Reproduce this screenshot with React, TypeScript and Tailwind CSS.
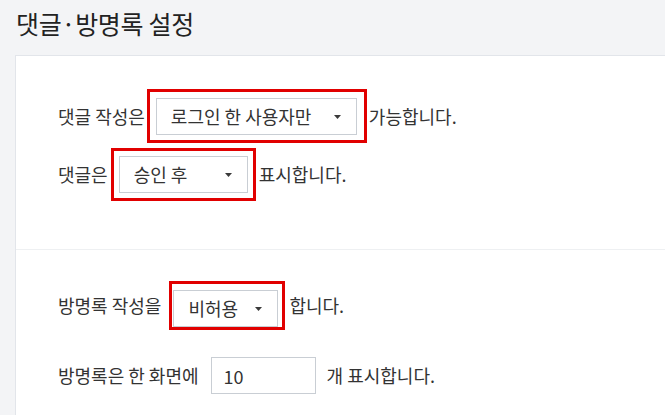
import { useState } from "react";

const FONT = { fontFamily: '"Noto Sans CJK KR", "Noto Sans", sans-serif' };

function Caret() {
  return (
    <svg width="7" height="4" viewBox="0 0 7 4" className="shrink-0">
      <path d="M0 0h7L3.5 4z" fill="#3a3a3a" />
    </svg>
  );
}

function Select({ value, width }: { value: string; width: string }) {
  return (
    <div
      className={`flex h-[37px] items-center justify-between border border-[#c9ced4] bg-white pl-[14px] pr-[15px] text-[18px] text-[#333] ${width}`}
    >
      <span>{value}</span>
      <Caret />
    </div>
  );
}

export default function App() {
  const [count, setCount] = useState("10");

  return (
    <div
      className="min-h-screen overflow-hidden bg-[#f3f4f6] text-[#333]"
      style={FONT}
    >
      <h1 className="pl-[16px] pt-[4px] text-[25px] leading-[38px] tracking-[-0.3px] text-[#222]">
        댓글·방명록 설정
      </h1>

      <div className="ml-[15px] mt-[13px] border-l border-t border-[#e2e5ea] bg-white">
        <div className="pb-[48px] pl-[42px] pt-[33px] text-[18px]">
          <div className="flex items-center">
            <span>댓글 작성은</span>
            <div className="ml-[2px] border-[3px] border-[#e10000] pb-[5px] pl-[6px] pr-[7px] pt-[6px]">
              <Select value="로그인 한 사용자만" width="w-[201px]" />
            </div>
            <span className="ml-[2px]">가능합니다.</span>
          </div>
          <div className="mt-[5px] flex items-center">
            <span>댓글은</span>
            <div className="ml-[3px] border-[3px] border-[#e10000] p-[5px]">
              <Select value="승인 후" width="w-[129px]" />
            </div>
            <span className="ml-[3px]">표시합니다.</span>
          </div>
        </div>

        <div className="border-t border-[#eef0f2] pb-[30px] pl-[42px] pt-[31px] text-[18px]">
          <div className="flex items-center">
            <span>방명록 작성을</span>
            <div className="ml-[8px] border-[3px] border-[#e10000] pl-[1px] pr-[4px] pt-[6px]">
              <Select value="비허용" width="w-[105px]" />
            </div>
            <span className="ml-[4px]">합니다.</span>
          </div>
          <div className="mt-[27px] flex items-center">
            <span>방명록은 한 화면에</span>
            <input
              value={count}
              onChange={(e) => setCount(e.target.value)}
              className="ml-[12px] h-[37px] w-[105px] border border-[#c9ced4] bg-white px-[12px] text-[18px] text-[#333] outline-none"
              style={FONT}
            />
            <span className="ml-[11px]">개 표시합니다.</span>
          </div>
        </div>
      </div>
    </div>
  );
}
